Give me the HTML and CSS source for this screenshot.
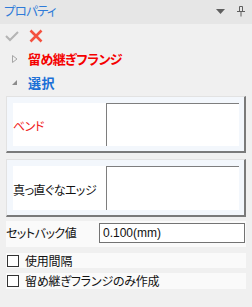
FILE: index.html
```html
<!DOCTYPE html>
<html lang="ja">
<head>
<meta charset="utf-8">
<link rel="stylesheet" href="styles.css">
</head>
<body>
<div class="panel">
  <div class="header">
    <span class="title">プロパティ</span>
    <span class="hicons">
      <svg width="12" height="8" viewBox="0 0 12 8"><polygon points="1,2 10,2 5.5,7" fill="#5f5f5f"/></svg>
      <svg width="10" height="12" viewBox="0 0 10 12"><path d="M3.5 1.5h3v5h-3z" fill="none" stroke="#5f5f5f" stroke-width="1"/><path d="M1 6.5h8M5 6.5v5" stroke="#5f5f5f" stroke-width="1"/></svg>
    </span>
  </div>
  <div class="toolbar">
    <svg class="ok" width="14" height="12" viewBox="0 0 14 12"><polyline points="1,6 5,10 13,2" fill="none" stroke="#b4b4b4" stroke-width="2"/></svg>
    <svg class="cancel" width="14" height="14" viewBox="0 0 14 14"><path d="M1.5 1.5L12.5 12.5M12.5 1.5L1.5 12.5" stroke="#f4513f" stroke-width="2.6"/></svg>
  </div>
  <div class="node">
    <svg class="tri" width="8" height="10" viewBox="0 0 8 10"><polygon points="1.5,1.5 6,5 1.5,8.5" fill="none" stroke="#a6a6a6" stroke-width="1"/></svg>
    <span class="node-label red">留め継ぎフランジ</span>
  </div>
  <div class="node node2">
    <svg class="tri" width="8" height="10" viewBox="0 0 8 10"><polygon points="6,3 6,8 1,8" fill="#8c8c8c"/></svg>
    <span class="node-label blue">選択</span>
  </div>
  <div class="group">
    <div class="group-inner">
      <div class="glabel red-thin">ベンド</div>
      <div class="gfield"></div>
    </div>
  </div>
  <div class="group group2">
    <div class="group-inner">
      <div class="glabel">真っ直ぐなエッジ</div>
      <div class="gfield"></div>
    </div>
  </div>
  <div class="setback">
    <span class="slabel">セットバック値</span>
    <div class="sinput">0.100(mm)</div>
  </div>
  <div class="check">
    <span class="box"></span><span class="clabel">使用間隔</span>
  </div>
  <div class="check check2">
    <span class="box"></span><span class="clabel">留め継ぎフランジのみ作成</span>
  </div>
</div>
</body>
</html>
```

FILE: styles.css
```css
html, body {
  margin: 0;
  padding: 0;
}
body {
  width: 252px;
  height: 307px;
  background: #f0f0f0;
  font-family: "Noto Sans CJK JP", "Noto Sans", sans-serif;
  font-feature-settings: "palt";
  overflow: hidden;
}
.panel {
  display: flex;
  flex-direction: column;
}
.header {
  height: 24px;
  background: #e6e6e6;
  display: flex;
  align-items: center;
  justify-content: space-between;
  padding: 0 6px 0 4px;
}
.title {
  font-size: 12.5px;
  letter-spacing: -0.8px;
  color: #2f7bd8;
  line-height: 1;
  margin-top: -2px;
}
.hicons {
  display: flex;
  align-items: center;
  gap: 9px;
  margin-top: -2px;
}
.toolbar {
  height: 24px;
  display: flex;
  align-items: center;
  padding-left: 5px;
  gap: 10px;
}
.node {
  height: 21px;
  display: flex;
  align-items: center;
  padding-left: 11px;
}
.node2 {
  height: 24px;
  margin-top: 1px;
}
.tri {
  display: block;
}
.node-label {
  font-size: 13px;
  font-weight: bold;
  margin-left: 9px;
  line-height: 1;
}
.red { color: #f50000; letter-spacing: -0.6px; }
.blue { color: #1b6fd6; letter-spacing: 0.5px; }
.group {
  margin: 2px 6px 0 6px;
  width: 240px;
  box-sizing: border-box;
  background: #f3f7fc;
  border-top: 1px solid #e2e2e2;
  border-left: 1px solid #e2e2e2;
  border-right: 2px solid #7a7a7a;
  border-bottom: 2px solid #7a7a7a;
  padding: 6px 5px 5px 6px;
}
.group2 {
  margin-top: 6px;
}
.group-inner {
  display: flex;
  height: 43px;
  background: #ffffff;
}
.group2 .group-inner {
  height: 44px;
}
.glabel {
  width: 93px;
  display: flex;
  align-items: center;
  font-size: 12px;
  letter-spacing: -0.5px;
  color: #111;
  padding-top: 2px;
  box-sizing: border-box;
}
.red-thin { color: #f02020; }
.gfield {
  flex: 1;
  border-top: 1px solid #7e7e7e;
  border-left: 1px solid #7e7e7e;
  background: #fff;
}
.setback {
  margin: 4px 6px 0 6px;
  height: 26px;
  background: #fafafa;
  display: flex;
  align-items: center;
  box-sizing: border-box;
}
.slabel {
  font-size: 12px;
  letter-spacing: -0.5px;
  width: 93px;
  color: #111;
  margin-top: -4px;
}
.sinput {
  width: 146px;
  height: 20px;
  box-sizing: border-box;
  border: 1px solid #737373;
  background: #fff;
  font-family: "Liberation Sans", sans-serif;
  font-size: 12px;
  padding-left: 3px;
  line-height: 18px;
  color: #111;
  margin-top: -3px;
}
.check {
  margin: 6px 6px 0 6px;
  height: 15px;
  background: #fafafa;
  display: flex;
  align-items: center;
}
.check2 {
  margin-top: 5px;
  height: 16px;
}
.box {
  width: 12px;
  height: 12px;
  box-sizing: border-box;
  border: 1px solid #333;
  background: #fff;
  margin-left: 1px;
}
.clabel {
  font-size: 12px;
  letter-spacing: -0.2px;
  margin-left: 6px;
  color: #111;
  line-height: 1;
}
```
